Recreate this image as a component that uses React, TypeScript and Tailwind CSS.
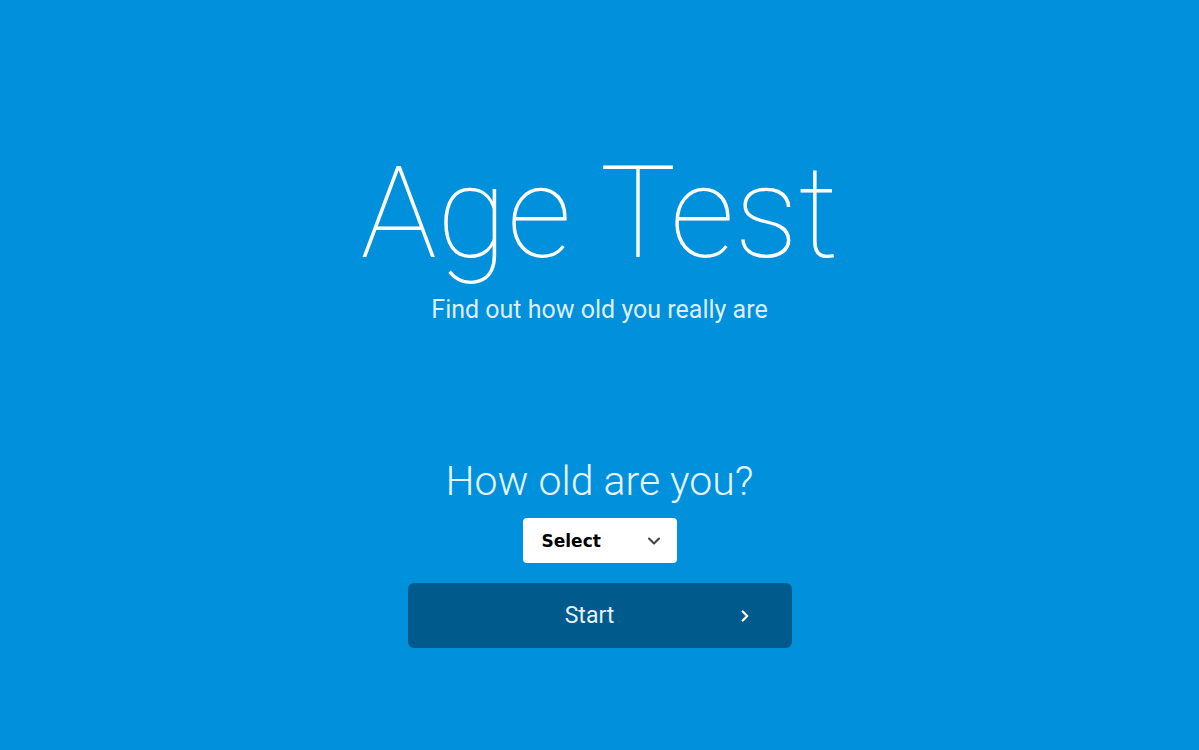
import { ChevronDown, ChevronRight } from "lucide-react";

export default function App() {
    return (
        <div
            className="min-h-[750px] w-full bg-[#0090dc] flex flex-col items-center text-white"
            style={{ fontFamily: "Roboto, 'Noto Sans', sans-serif" }}
        >
            {/* Title */}
            <h1 className="mt-[149px] text-[128px] leading-none font-thin">Age Test</h1>
            <p className="mt-[20px] text-[25px] leading-none font-normal text-[#dcefff]">
                Find out how old you really are
            </p>

            {/* Question */}
            <h2 className="mt-[139px] text-[41px] leading-none font-light text-[#e6f4ff]">How old are you?</h2>

            {/* Age select */}
            <div className="mt-[16px] w-[154px] h-[45px] bg-white rounded-[4px] flex items-center justify-between pl-[19px] pr-[13px] pt-[3px] text-black">
                <span
                    className="text-[17px] font-bold"
                    style={{ fontFamily: "'DejaVu Sans', sans-serif" }}
                >
                    Select
                </span>
                <ChevronDown size={20} strokeWidth={2.5} className="text-[#444] -mt-[3px]" />
            </div>

            {/* Start button */}
            <button className="mt-[20px] w-[384px] h-[65px] bg-[#005a8c] rounded-[6px] relative flex items-center justify-center pr-[20px] pt-[1px]">
                <span className="text-[23px] text-[#e3f1fb]">Start</span>
                <ChevronRight size={18} strokeWidth={3} className="absolute right-[38px] text-white" />
            </button>
        </div>
    );
}
